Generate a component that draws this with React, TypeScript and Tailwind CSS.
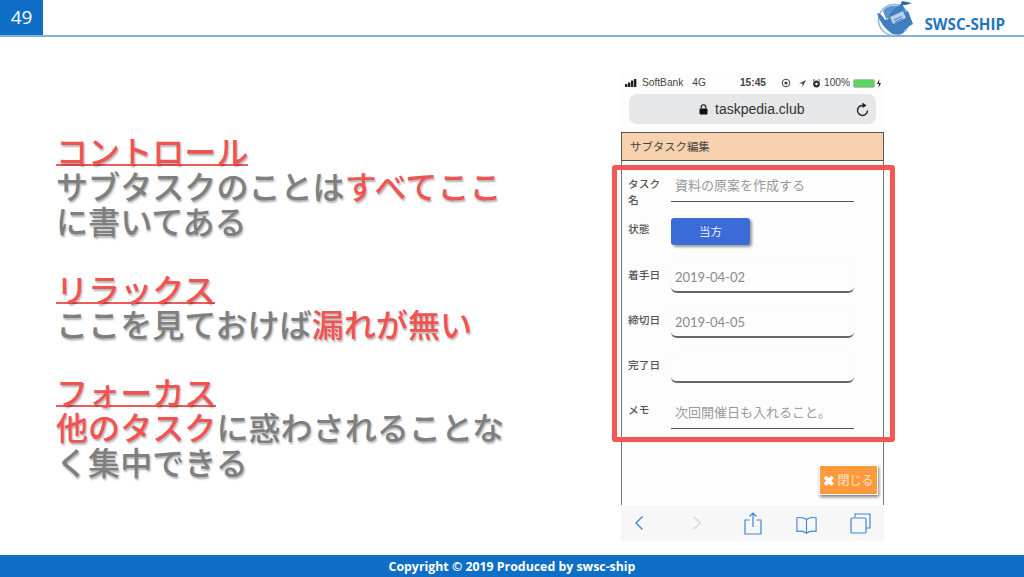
import React from "react";

const jp = { fontFamily: '"Noto Sans CJK JP", "Noto Sans", sans-serif' };

function Logo() {
  return (
    <svg width="40" height="36" viewBox="0 0 40 36" className="shrink-0 self-start">
      <circle cx="19" cy="20" r="15.5" fill="none" stroke="#8fb4d9" strokeWidth="1.5" />
      <path d="M2 13 Q7 14 10 20 L33 11 L38 24 Q30 28 28 33 Q20 36 16 33 Q6 26 2 13 Z" fill="#3f7fc0" />
      <path d="M8 11 Q12 5 22 6 L24 12 L11 19 Z" fill="#5a94cf" />
      <path d="M27 14 L27 2" stroke="#3f7fc0" strokeWidth="2" />
      <path d="M20 8 L27 3 L30 10 L33 19 L17 26 L13 17 Z" fill="#3f7fc0" />
      <path d="M15 17 L28 11 L31 18 L18 24 Z" fill="#b8cfe6" />
      <path d="M27 1 L37 3 L31 5 L27 5 Z" fill="#2f6aa8" />
      <path d="M19 20 L27 16.5 M20 22 L28 18.5" stroke="#4f86c2" strokeWidth="1.2" />
    </svg>
  );
}

function Header() {
  return (
    <header className="h-[37px] flex items-stretch border-b-2 border-[#7fb1d9] shrink-0">
      <div className="w-[43px] bg-[#0f6fc6] text-white text-[19px] flex items-center justify-center" style={{ fontFamily: '"Open Sans", sans-serif' }}>
        49
      </div>
      <div className="ml-auto flex items-center pr-[19px] gap-[9px] h-[35px]">
        <Logo />
        <span className="text-[15.2px] font-bold text-[#1f77bd] mt-[14px] leading-none" style={{ fontFamily: '"Open Sans", sans-serif' }}>SWSC-SHIP</span>
      </div>
    </header>
  );
}

const shadow = "[text-shadow:1px_2px_2px_rgba(0,0,0,0.3)]";

function Heading({ children }: { children: React.ReactNode }) {
  return (
    <div className={`inline-block text-[#f15353] border-b-2 border-[#ee5b5b] leading-[30px] h-[31px] ${shadow}`}>
      {children}
    </div>
  );
}

function R({ children }: { children: React.ReactNode }) {
  return <span className="text-[#f15353]">{children}</span>;
}

function LeftText() {
  return (
    <div className="w-[456px] ml-[56px] mt-[96px] text-[32.1px] font-medium text-[#7f7f7f] leading-[35px]" style={jp}>
      <Heading>コントロール</Heading>
      <p className={shadow}>サブタスクのことは<R>すべてここ</R><br />に書いてある</p>
      <div className="mt-[33px]"><Heading>リラックス</Heading></div>
      <p className={shadow}>ここを見ておけば<R>漏れが無い</R></p>
      <div className="mt-[33px]"><Heading>フォーカス</Heading></div>
      <p className={shadow}><R>他のタスク</R>に惑わされることな<br />く集中できる</p>
    </div>
  );
}

function StatusBar() {
  return (
    <div className="h-[22px] flex items-center pl-[4px] text-[10.2px] text-[#444]" style={{ fontFamily: '"Liberation Sans", sans-serif' }}>
      <svg width="14" height="8" viewBox="0 0 14 8" className="mr-[3px]"><rect x="0" y="5" width="2.4" height="3" fill="#222" /><rect x="3" y="3.5" width="2.4" height="4.5" fill="#222" /><rect x="6" y="1.5" width="2.4" height="6.5" fill="#222" /><rect x="9" y="0" width="2.4" height="8" fill="#222" /></svg>
      <span>SoftBank</span>
      <span className="ml-[9px]">4G</span>
      <span className="ml-[34px] font-bold">15:45</span>
      <svg width="10" height="10" viewBox="0 0 10 10" className="ml-[15px]"><circle cx="5" cy="5" r="3.8" fill="none" stroke="#444" /><circle cx="5" cy="5" r="1.6" fill="#444" /></svg>
      <svg width="9" height="9" viewBox="0 0 9 9" className="ml-[7px]"><path d="M8 1 L1 4.5 L4.5 4.5 L4.5 8 Z" fill="#444" /></svg>
      <svg width="9" height="9" viewBox="0 0 9 9" className="ml-[5px]"><circle cx="4.5" cy="5" r="3.4" fill="#333" /><circle cx="4.5" cy="5" r="1.2" fill="#fff" /><path d="M1 1.5 L2.5 .5 M8 1.5 L6.5 .5" stroke="#333" /></svg>
      <span className="ml-[3px]">100%</span>
      <div className="ml-[3px] w-[22px] h-[9px] rounded-[2px] bg-[#5fd35f] border border-[#bbb]" />
      <svg width="6" height="9" viewBox="0 0 6 9" className="ml-[1px]"><path d="M3.5 0 L1 5 L3 5 L2.5 9 L5 4 L3 4 Z" fill="#222" /></svg>
    </div>
  );
}

function UrlBar() {
  return (
    <div className="h-[38px] px-[8px] pb-[8px]">
      <div className="h-[30px] bg-[#e6e7e9] rounded-[8px] flex items-center pl-[70px] pr-[6px]">
        <svg width="9" height="11" viewBox="0 0 9 11"><rect x="0.5" y="4.5" width="8" height="6" rx="1" fill="#111" /><path d="M2.2 4.5 V3 a2.3 2.3 0 0 1 4.6 0 V4.5" fill="none" stroke="#111" strokeWidth="1.1" /></svg>
        <span className="ml-[7px] text-[14px] text-[#333]" style={{ fontFamily: '"Liberation Sans", sans-serif' }}>taskpedia.club</span>
        <svg width="14" height="15" viewBox="0 0 14 15" className="ml-auto"><path d="M11.5 8.5 A5 5 0 1 1 7 3.5" fill="none" stroke="#222" strokeWidth="1.4" /><path d="M6.5 0.5 L10.5 3.5 L6.5 6 Z" fill="#222" /></svg>
      </div>
    </div>
  );
}

function Label({ children, top }: { children: React.ReactNode; top: string }) {
  return <div className={`w-[43px] shrink-0 text-[10.7px] font-medium text-[#555] leading-[16px] ${top}`}>{children}</div>;
}

function UnderlineField({ text, label, labelTop }: { text: string; label: React.ReactNode; labelTop: string }) {
  return (
    <div className="flex h-[32px]">
      <Label top={labelTop}>{label}</Label>
      <div className="w-[183px] border-b border-[#555] pl-[4px] pt-[6px] text-[13px] text-[#999] leading-[18px]">{text}</div>
    </div>
  );
}

function DateField({ label, value, mt }: { label: string; value: string; mt: string }) {
  return (
    <div className={`flex h-[31px] ${mt}`}>
      <Label top="mt-[5px]">{label}</Label>
      <div className="w-[183px] h-[31px] rounded-[6px] border-b-2 border-[#666] shadow-[0_0_1px_rgba(0,0,0,0.12)] pl-[4px] pt-[6px] text-[13px] leading-[18px] text-[#8a8a8a]" style={{ fontFamily: '"Lato", sans-serif' }}>
        {value}
      </div>
    </div>
  );
}

function Form() {
  return (
    <div className="flex-1 flex flex-col border-x border-[#777] pl-[6px] pt-[9px]" style={jp}>
      <UnderlineField label={<>タスク<br />名</>} labelTop="mt-[6px]" text="資料の原案を作成する" />
      <div className="flex mt-[16px] h-[27px]">
        <Label top="mt-[3px]">状態</Label>
        <button className="w-[79px] h-[27px] bg-[#3a6bd6] rounded-[3px] text-[#e8eefc] text-[11.5px] shadow-[2px_2px_3px_rgba(0,0,0,0.4)]">当方</button>
      </div>
      <DateField label="着手日" value="2019-04-02" mt="mt-[17px]" />
      <DateField label="締切日" value="2019-04-05" mt="mt-[14px]" />
      <DateField label="完了日" value="" mt="mt-[14px]" />
      <div className="mt-[14px]">
        <UnderlineField label="メモ" labelTop="mt-[5px]" text="次回開催日も入れること。" />
      </div>
      <div className="flex justify-end pr-[5px] mt-[36px]">
        <button className="w-[59px] h-[30px] bg-[#ff9a3c] border border-white text-[#fde4cc] text-[12px] flex items-center justify-center gap-[2px] shadow-[1px_2px_3px_rgba(0,0,0,0.5)]">
          <span className="font-bold text-white text-[14px] leading-none">✖</span>閉じる
        </button>
      </div>
    </div>
  );
}

function Toolbar() {
  const c = "#3d86d8";
  return (
    <div className="h-[36px] bg-[#f7f7f7] flex items-center pl-[13px] shrink-0">
      <svg width="10" height="16" viewBox="0 0 10 16"><path d="M8.5 1.5 L2 8 L8.5 14.5" fill="none" stroke={c} strokeWidth="1.4" /></svg>
      <svg width="10" height="16" viewBox="0 0 10 16" className="ml-[48px]"><path d="M1.5 1.5 L8 8 L1.5 14.5" fill="none" stroke="#d5d5d5" strokeWidth="1.4" /></svg>
      <svg width="18" height="23" viewBox="0 0 18 23" className="ml-[42px]"><path d="M5.5 8 H1 V22 H17 V8 H12.5 M9 15 V1 M5.5 4.5 L9 1 L12.5 4.5" fill="none" stroke={c} strokeWidth="1.2" /></svg>
      <svg width="21" height="20" viewBox="0 0 23 20" className="ml-[34px] mt-[3px]"><path d="M11.5 4 Q8 1 1 2 V17 Q8 16 11.5 19 Q15 16 22 17 V2 Q15 1 11.5 4 Z M11.5 4 V19" fill="none" stroke={c} strokeWidth="1.2" /></svg>
      <svg width="21" height="21" viewBox="0 0 21 21" className="ml-[33px]"><path d="M5 4 V1 H20 V15 H16" fill="none" stroke={c} strokeWidth="1.2" /><rect x="1" y="5" width="15" height="15" rx="1" fill="none" stroke={c} strokeWidth="1.2" /></svg>
    </div>
  );
}

function Phone() {
  return (
    <div className="w-[263px] h-[469px] mt-[35px] ml-[109px] flex flex-col bg-[#fdfdfd] shrink-0 relative">
      <StatusBar />
      <UrlBar />
      <div className="h-[29px] bg-[#f8d1ae] border border-[#555] pl-[8px] text-[11.4px] text-[#444] flex items-center shrink-0" style={jp}>サブタスク編集</div>
      <Form />
      <Toolbar />
      <div className="absolute left-[-9px] top-[93px] w-[283px] h-[277px] border-[5px] border-[#f65555] rounded-[3px] pointer-events-none" />
    </div>
  );
}

export default function App() {
  return (
    <div className="w-[1024px] h-[577px] bg-white flex flex-col overflow-hidden">
      <Header />
      <main className="flex-1 flex items-start">
        <LeftText />
        <Phone />
      </main>
      <footer className="h-[22px] bg-[#0f6fc6] text-white text-[12.35px] font-bold flex items-center justify-center pt-[2px] shrink-0" style={{ fontFamily: '"Open Sans", sans-serif' }}>
        Copyright © 2019 Produced by swsc-ship
      </footer>
    </div>
  );
}
